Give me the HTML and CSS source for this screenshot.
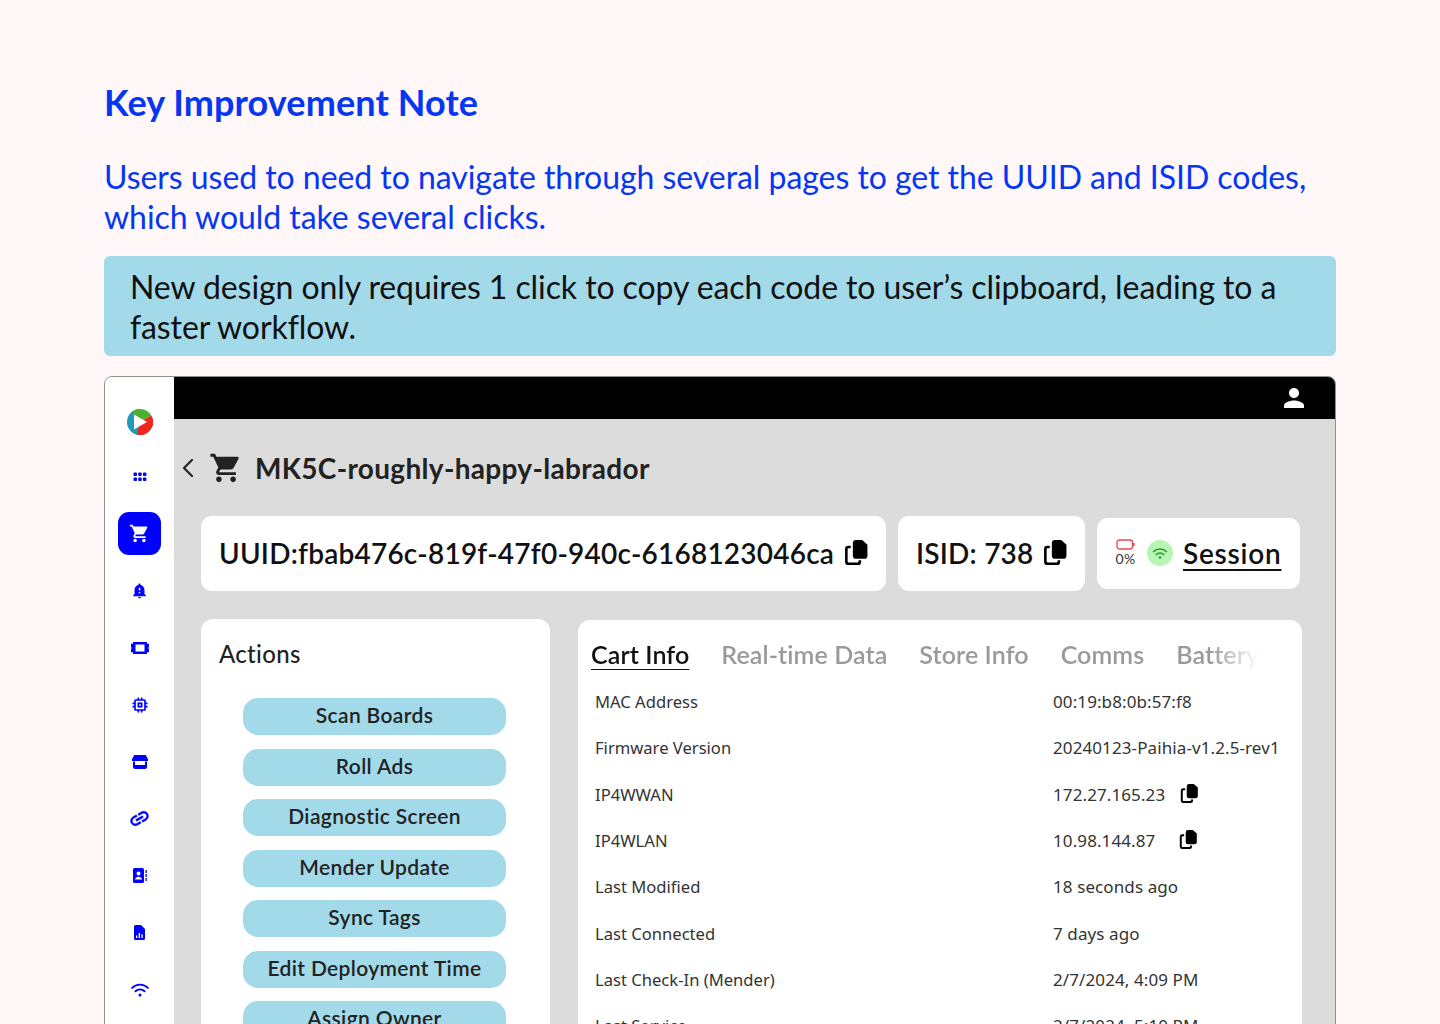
FILE: index.html
```html
<!DOCTYPE html>
<html lang="en">
<head>
<meta charset="utf-8">
<title>Key Improvement Note</title>
<link rel="stylesheet" href="styles.css">
</head>
<body>
<svg class="defs" width="0" height="0" aria-hidden="true">
  <symbol id="copy" viewBox="0 0 24 24"><path d="M11.500 0h6L22.500 4.500V15a3 3 0 0 1-3 3H11.500a3 3 0 0 1-3-3V3a3 3 0 0 1 3-3z"/><path d="M6.500 5.500v2.500H4.500a1 1 0 0 0-1 1v11.500a1 1 0 0 0 1 1H13a1 1 0 0 0 1-1V19.500h2.500V21a3 3 0 0 1-3 3H4a3 3 0 0 1-3-3V8.500a3 3 0 0 1 3-3z"/></symbol>
  <symbol id="cart" viewBox="0 0 24 24"><path d="M7 18c-1.100 0-1.990.9-1.990 2S5.900 22 7 22s2-.9 2-2-.9-2-2-2zM1 2v2h2l3.600 7.590-1.350 2.450c-.16.280-.25.610-.25.960 0 1.100.9 2 2 2h12v-2H7.420c-.14 0-.25-.11-.25-.25l.03-.12.9-1.630h7.450c.750 0 1.410-.41 1.750-1.030l3.580-6.490c.08-.14.120-.31.120-.48 0-.55-.45-1-1-1H5.210l-.94-2H1zm16 16c-1.100 0-1.990.9-1.990 2s.89 2 1.990 2 2-.9 2-2-.9-2-2-2z"/></symbol>
</svg>

<main class="page">
  <h1 class="title">Key Improvement Note</h1>
  <p class="lead">Users used to need to navigate through several pages to get the UUID and ISID codes, which would take several clicks.</p>
  <p class="callout">New design only requires 1 click to copy each code to user’s clipboard, leading to a faster workflow.</p>

  <section class="frame">
    <nav class="rail">
      <div class="rail-logo">
        <svg viewBox="0 0 26 26" width="26" height="26">
          <path fill="#1f9bb8" d="M13 0A13 13 0 0 0 13 26z"/>
          <path fill="#4caf2f" d="M5 2.700A13 13 0 0 1 24.300 6.500L13 13z"/>
          <path fill="#f0261c" d="M24.300 6.500A13 13 0 0 1 10 25.700L13 13z"/>
          <path fill="#0f86a8" d="M13 26A13 13 0 0 1 6 24z"/>
          <path fill="#fff" d="M7 5.500l13 7.500-13 7.500z"/>
        </svg>
      </div>
      <a class="rail-item"><svg viewBox="0 0 14 10" width="14" height="10" fill="#0000ff"><rect x="0.500" y="0.500" width="3.500" height="3.500" rx="1"/><rect x="5.200" y="0.500" width="3.500" height="3.500" rx="1"/><rect x="9.900" y="0.500" width="3.500" height="3.500" rx="1"/><rect x="0.500" y="5.500" width="3.500" height="3.500" rx="1"/><rect x="5.200" y="5.500" width="3.500" height="3.500" rx="1"/><rect x="9.900" y="5.500" width="3.500" height="3.500" rx="1"/></svg></a>
      <a class="rail-item"><span class="rail-active"><svg width="21" height="21" fill="#fff"><use href="#cart"/></svg></span></a>
      <a class="rail-item"><svg viewBox="0 0 24 24" width="17" height="17" fill="#0000ff"><path d="M12 23c1.100 0 1.990-.89 1.990-1.990h-3.980c0 1.100.89 1.990 1.990 1.990zm7-6v-6c0-3.350-2.360-6.150-5.500-6.830V3.500c0-.83-.67-1.500-1.500-1.500s-1.500.67-1.500 1.500v.67C7.360 4.850 5 7.650 5 11v6l-2 2v1h18v-1l-2-2zm-6-1h-2v-2h2v2zm0-4h-2V8h2v4z"/></svg></a>
      <a class="rail-item"><svg viewBox="0 0 18 12" width="18" height="12" fill="#0000ff"><path fill-rule="evenodd" d="M2 0h14v1.500a1.500 1.500 0 0 0 2 0V5a1.200 1.200 0 0 0 0 2v3.500a1.500 1.500 0 0 0-2 0V12H2v-1.500a1.500 1.500 0 0 0-2 0V7a1.200 1.200 0 0 0 0-2V1.500a1.500 1.500 0 0 0 2 0zM4.500 2.500v7h9v-7z"/></svg></a>
      <a class="rail-item"><svg viewBox="0 0 24 24" width="20" height="20" fill="#0000ff"><path d="M15 9H9v6h6V9zm-2 4h-2v-2h2v2zm8-2V9h-2V7c0-1.100-.9-2-2-2h-2V3h-2v2h-2V3H9v2H7c-1.100 0-2 .9-2 2v2H3v2h2v2H3v2h2v2c0 1.100.9 2 2 2h2v2h2v-2h2v2h2v-2h2c1.100 0 2-.9 2-2v-2h2v-2h-2v-2h2zm-4 6H7V7h10v10z"/></svg></a>
      <a class="rail-item"><svg viewBox="0 0 16 14" width="16" height="14" fill="#0000ff"><path d="M2.200 0h11.600L16 4.200V6H0V4.200z"/><path d="M1 6.500h2V10h10V6.500h2V12a2 2 0 0 1-2 2H3a2 2 0 0 1-2-2z"/></svg></a>
      <a class="rail-item"><svg class="rail-link" viewBox="0 0 24 24" width="23" height="23" fill="#0000ff" stroke="#0000ff" stroke-width="0.500"><path d="M3.900 12c0-1.710 1.390-3.100 3.100-3.100h4V7H7c-2.760 0-5 2.240-5 5s2.240 5 5 5h4v-1.900H7c-1.710 0-3.100-1.390-3.100-3.100zM8 13h8v-2H8v2zm9-6h-4v1.900h4c1.710 0 3.100 1.390 3.100 3.100s-1.390 3.100-3.100 3.100h-4V17h4c2.760 0 5-2.240 5-5s-2.240-5-5-5z"/></svg></a>
      <a class="rail-item"><svg viewBox="0 0 14 15" width="14" height="15" fill="#0000ff"><path fill-rule="evenodd" d="M1.500 0h8A1.500 1.500 0 0 1 11 1.500v12A1.500 1.500 0 0 1 9.500 15h-8A1.500 1.500 0 0 1 0 13.500v-12A1.500 1.500 0 0 1 1.500 0zM5.500 3.500a2 2 0 1 0 0 4 2 2 0 0 0 0-4zM2 11.500h7c0-1.500-1.800-2.700-3.500-2.700S2 10 2 11.500z"/><path d="M12.500 2h1.300v3h-1.300zM12.500 6h1.300v3h-1.300zM12.500 10h1.300v3h-1.300z"/></svg></a>
      <a class="rail-item"><svg viewBox="0 0 11 15" width="11" height="15" fill="#0000ff"><path fill-rule="evenodd" d="M1.500 0H7l4 4v9.500a1.500 1.500 0 0 1-1.500 1.500h-8A1.500 1.500 0 0 1 0 13.500v-12A1.500 1.500 0 0 1 1.500 0zM2 10.500v2.500h1.300v-2.500zM4.700 8v5H6V8zM7.400 9.300V13h1.300V9.300z"/></svg></a>
      <a class="rail-item"><svg viewBox="0 0 24 24" width="20" height="20" fill="none" stroke="#0000ff" stroke-width="2.200" stroke-linecap="round"><path d="M2.500 9.500a13.500 13.500 0 0 1 19 0"/><path d="M6.500 13.500a8 8 0 0 1 11 0"/><circle cx="12" cy="18" r="1.800" fill="#0000ff" stroke="none"/></svg></a>
    </nav>

    <div class="app">
      <header class="topbar">
        <svg viewBox="0 0 24 24" width="30" height="30" fill="#fff"><path d="M12 12c2.210 0 4-1.790 4-4s-1.790-4-4-4-4 1.790-4 4 1.790 4 4 4zm0 2c-2.670 0-8 1.340-8 4v2h16v-2c0-2.660-5.330-4-8-4z"/></svg>
      </header>

      <div class="content">
        <div class="crumb">
          <svg class="back" viewBox="0 0 12 20" width="12" height="20" fill="none" stroke="#222" stroke-width="2.200" stroke-linecap="round" stroke-linejoin="round"><path d="M10 2L2 10l8 8"/></svg>
          <svg class="crumb-cart" width="34" height="34" fill="#222"><use href="#cart"/></svg>
          <h2 class="cart-name">MK5C-roughly-happy-labrador</h2>
        </div>

        <div class="chips">
          <div class="chip chip-uuid"><span>UUID:fbab476c-819f-47f0-940c-6168123046ca</span><svg class="copy-lg"><use href="#copy"/></svg></div>
          <div class="chip chip-isid"><span>ISID: 738</span><svg class="copy-lg"><use href="#copy"/></svg></div>
          <div class="chip chip-session">
            <div class="batt">
              <svg viewBox="0 0 19 11" width="19" height="11" fill="none"><rect x="1" y="1" width="15.500" height="9" rx="2.500" stroke="#f0444c" stroke-width="1.300"/><rect x="17" y="4" width="1.600" height="3" fill="#f0444c"/></svg>
              <span class="batt-pct">0%</span>
            </div>
            <span class="wifi-dot"><svg viewBox="0 0 24 24" width="18" height="18" fill="none" stroke="#1d9a2e" stroke-width="2.200" stroke-linecap="round"><path d="M3.500 10a12.500 12.500 0 0 1 17 0"/><path d="M7 14a7.500 7.500 0 0 1 10 0"/><circle cx="12" cy="18" r="1.700" fill="#1d9a2e" stroke="none"/></svg></span>
            <a class="session-link">Session</a>
          </div>
        </div>

        <div class="columns">
          <aside class="card actions">
            <h3 class="actions-title">Actions</h3>
            <div class="action-list">
              <button class="action">Scan Boards</button>
              <button class="action">Roll Ads</button>
              <button class="action">Diagnostic Screen</button>
              <button class="action">Mender Update</button>
              <button class="action">Sync Tags</button>
              <button class="action">Edit Deployment Time</button>
              <button class="action">Assign Owner</button>
            </div>
          </aside>

          <section class="card info">
            <div class="tabs">
              <a class="tab tab-on">Cart Info</a>
              <a class="tab">Real-time Data</a>
              <a class="tab">Store Info</a>
              <a class="tab">Comms</a>
              <a class="tab">Battery</a>
            </div>
            <dl class="rows">
              <div class="row"><dt>MAC Address</dt><dd>00:19:b8:0b:57:f8</dd></div>
              <div class="row"><dt>Firmware Version</dt><dd>20240123-Paihia-v1.2.5-rev1</dd></div>
              <div class="row"><dt>IP4WWAN</dt><dd>172.27.165.23<svg class="copy-sm"><use href="#copy"/></svg></dd></div>
              <div class="row"><dt>IP4WLAN</dt><dd>10.98.144.87<svg class="copy-sm copy-sm-wide"><use href="#copy"/></svg></dd></div>
              <div class="row"><dt>Last Modified</dt><dd>18 seconds ago</dd></div>
              <div class="row"><dt>Last Connected</dt><dd>7 days ago</dd></div>
              <div class="row"><dt>Last Check-In (Mender)</dt><dd>2/7/2024, 4:09 PM</dd></div>
              <div class="row"><dt>Last Service</dt><dd>2/7/2024, 5:10 PM</dd></div>
            </dl>
          </section>
        </div>
      </div>
    </div>
  </section>
</main>
</body>
</html>
```
FILE: styles.css
```css
* { box-sizing: border-box; }
html, body { margin: 0; height: 1024px; overflow: hidden; }
body { background: #fff7f8; font-family: "Lato", "Liberation Sans", sans-serif; }
.defs { position: absolute; }

.page { padding: 82px 104px 0; height: 1024px; overflow: hidden; }
.title { margin: 0 0 35px; font: 700 36px/40px "Lato", sans-serif; color: #0536f2; letter-spacing: 0.1px; }
.lead { margin: 0; font: 400 32px/40px "Lato", sans-serif; color: #0536f2; letter-spacing: -0.05px; }
.callout { margin: 19px 0 20px; padding: 11px 26px 9px; height: 100px; background: #a2daea; border-radius: 6px; font: 400 32px/40px "Lato", sans-serif; color: #111; letter-spacing: -0.09px; }

.frame { display: flex; height: 700px; border: 1px solid #8f8f8f; border-radius: 8px; overflow: hidden; background: #dcdcdc; }

.rail { flex: 0 0 69px; background: #fff; padding-top: 18px; display: flex; flex-direction: column; align-items: center; }
.rail-logo { height: 53px; display: flex; align-items: center; justify-content: center; }
.rail-item { flex: 0 0 57px; display: flex; align-items: center; justify-content: center; }
.rail-active { width: 43px; height: 43px; border-radius: 11px; background: #0000ff; display: flex; align-items: center; justify-content: center; }
.rail-link { transform: rotate(-30deg); }

.app { flex: 1; min-width: 0; display: flex; flex-direction: column; }
.topbar { flex: 0 0 42px; background: #000; display: flex; align-items: center; justify-content: flex-end; padding-right: 26px; }

.content { flex: 1; padding: 0 33px 0 27px; }
.crumb { height: 97px; display: flex; align-items: center; margin-left: -21px; }
.back { margin-left: 2px; }
.crumb-cart { margin: 0 12px 0 15px; }
.cart-name { margin: 0; font: 700 28px/36px "Lato", sans-serif; color: #222; letter-spacing: 0.32px; }

.chips { display: flex; align-items: center; gap: 12px; height: 75px; }
.chip { background: #fff; border-radius: 11px; display: flex; align-items: center; color: #111; font: 600 28px/36px "Lato", sans-serif; letter-spacing: 0.22px; }
.chip > span { position: relative; top: -1px; }
.chip-uuid { width: 685px; height: 75px; padding: 0 17px 0 18px; justify-content: space-between; }
.chip-isid { width: 187px; height: 75px; padding: 0 17px 0 18px; justify-content: space-between; }
.chip-session { width: 203px; height: 71px; padding: 0 18px; gap: 10.500px; }
.copy-lg { width: 25px; height: 25px; fill: #000; flex: none; margin-top: -2px; }
.batt { display: flex; flex-direction: column; align-items: center; width: 21px; margin-top: -3px; }
.batt-pct { font: 400 14px/14px "Lato", sans-serif; color: #333; margin-top: 2px; }
.wifi-dot { width: 26px; height: 26px; border-radius: 50%; background: #b6f5b3; display: flex; align-items: center; justify-content: center; }
.session-link { position: relative; top: -1px; text-decoration: underline; text-underline-offset: 5px; text-decoration-thickness: 2px; color: #111; letter-spacing: 0.75px; }

.columns { display: flex; gap: 28px; margin-top: 28px; align-items: flex-start; }
.card { background: #fff; border-radius: 12px; height: 500px; }
.actions { width: 349px; padding: 19px 0 0 18px; }
.actions-title { margin: 0 0 28px; font: 500 24px/32px "Lato", sans-serif; color: #222; letter-spacing: 0.3px; }
.action-list { display: flex; flex-direction: column; gap: 13.500px; width: 263px; margin-left: 24px; }
.action { height: 37px; border: 0; padding: 0 0 3px; border-radius: 15px; background: #a2daea; font: 600 21px/34px "Lato", sans-serif; color: #222; letter-spacing: 0.35px; }

.info { width: 724px; margin-top: 1px; padding: 18px 0 0 13px; }
.tabs { display: flex; gap: 32px; font: 600 25px/32px "Lato", sans-serif; color: #9a9a9a; height: 32px; letter-spacing: 0.1px; -webkit-mask-image: linear-gradient(90deg, #000 620px, transparent 668px); mask-image: linear-gradient(90deg, #000 620px, transparent 668px); }
.tab-on { color: #111; text-decoration: underline; text-underline-offset: 5px; text-decoration-thickness: 2px; }

.rows { margin: 9px 0 0 4px; }
.row { display: flex; height: 46.300px; align-items: center; font: 400 16.600px/24px "Noto Sans", sans-serif; color: #333; }
.row dt { flex: 0 0 458px; }
.row dd { margin: 0; display: flex; align-items: center; white-space: nowrap; font-size: 17px; letter-spacing: 0.1px; }
.copy-sm { width: 19px; height: 19px; fill: #000; margin: -3px 0 0 15px; }
.copy-sm-wide { margin-left: 24px; }
```
